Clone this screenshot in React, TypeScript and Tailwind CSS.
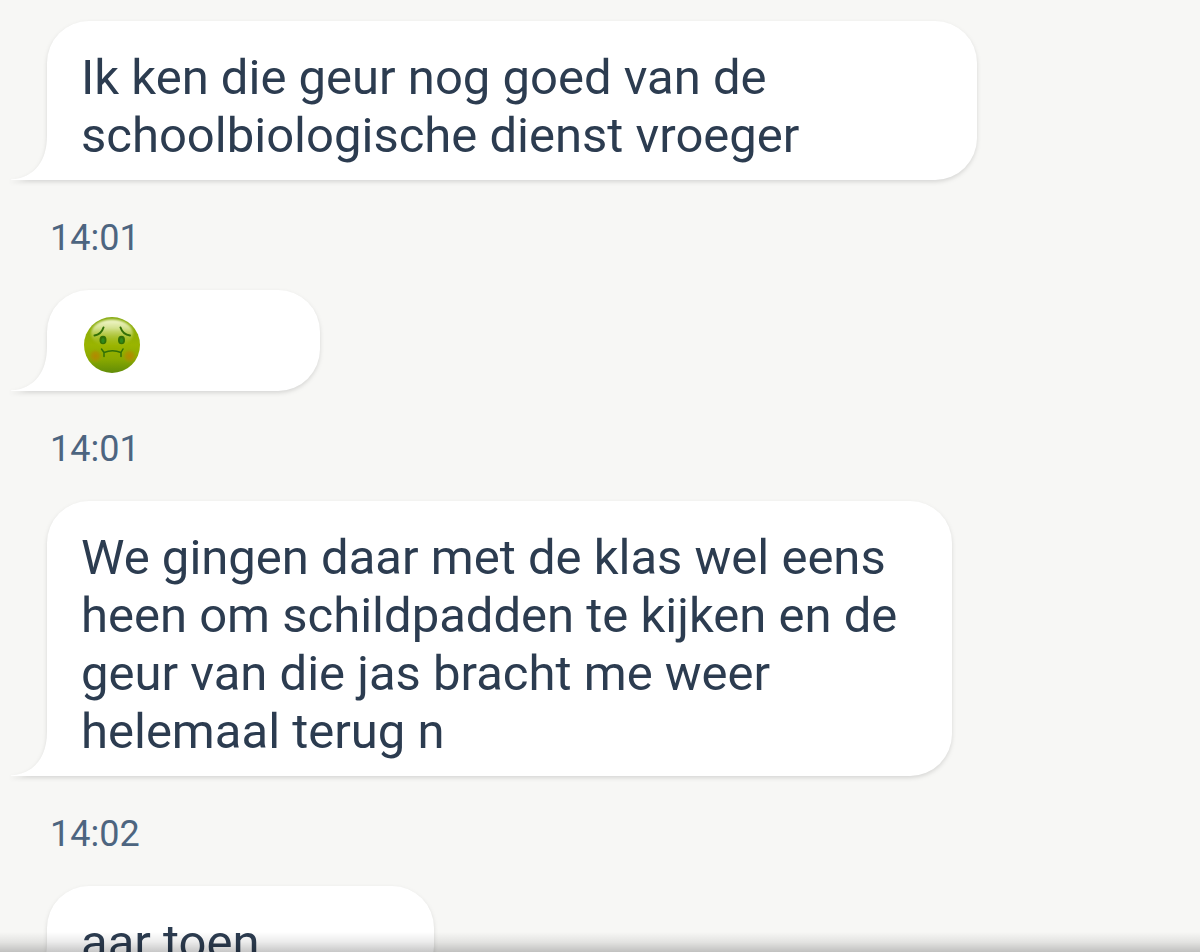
type Message = { text: string; time?: string; box: string; emoji?: boolean };

const messages: Message[] = [
  {
    text: 'Ik ken die geur nog goed van de schoolbiologische dienst vroeger',
    time: '14:01',
    box: 'max-w-[930px] pt-7 pb-[15px]',
  },
  { text: 'Misselijk', time: '14:01', box: 'max-w-[273px] pt-[26px] pb-[17px]', emoji: true },
  {
    text: 'We gingen daar met de klas wel eens heen om schildpadden te kijken en de geur van die jas bracht me weer helemaal terug n',
    time: '14:02',
    box: 'max-w-[905px] pt-7 pb-[15px]',
  },
  { text: 'aar toen', box: 'max-w-[387px] pt-7 pb-[15px]' },
];

function NauseatedFace() {
  return (
    <svg viewBox="0 0 58 58" className="ml-0.5 size-[58px]" role="img" aria-label="Misselijk gezicht">
      <defs>
        <linearGradient id="face" x1="0" y1="0" x2="0" y2="1">
          <stop offset="0" stopColor="#83a80c" />
          <stop offset="0.5" stopColor="#9ab400" />
          <stop offset="0.75" stopColor="#8aa900" />
          <stop offset="1" stopColor="#618c08" />
        </linearGradient>
        <linearGradient id="shine" x1="0" y1="0" x2="0" y2="1">
          <stop offset="0" stopColor="#f4f8cf" />
          <stop offset="0.3" stopColor="#e3edab" stopOpacity="0.85" />
          <stop offset="1" stopColor="#a5bd16" stopOpacity="0" />
        </linearGradient>
        <radialGradient id="cheek">
          <stop offset="0" stopColor="#bd8000" stopOpacity="0.8" />
          <stop offset="0.5" stopColor="#b68700" stopOpacity="0.6" />
          <stop offset="1" stopColor="#a39b00" stopOpacity="0" />
        </radialGradient>
        <filter id="soft" x="-20%" y="-20%" width="140%" height="140%">
          <feGaussianBlur stdDeviation="1.2" />
        </filter>
      </defs>
      <circle cx="29" cy="29" r="28" fill="url(#face)" />
      <ellipse cx="29" cy="17.500" rx="21" ry="14" fill="url(#shine)" filter="url(#soft)" />
      <circle cx="12.500" cy="40" r="7.500" fill="url(#cheek)" />
      <circle cx="46.500" cy="40" r="7.500" fill="url(#cheek)" />
      <g fill="none" stroke="#327006" strokeLinecap="round" strokeLinejoin="round">
        <path d="M11.500 19.500c4-.5 7.500-3.500 9-8" strokeWidth="2" />
        <path d="M37.500 11.500c1.500 4.500 5 7.500 9.500 8" strokeWidth="2" />
        <path d="M21 36.500c5-2.200 12-2.200 17 0M18.500 33l2.500 3.500v4M40 33l-2 3.500v4" strokeWidth="1.500" />
      </g>
      <ellipse cx="20" cy="24" rx="3.500" ry="4.300" fill="#327006" />
      <ellipse cx="38.500" cy="24" rx="3.500" ry="4.300" fill="#327006" />
      <ellipse cx="20" cy="24.500" rx="1.700" ry="2.500" fill="#32891b" />
      <ellipse cx="38.500" cy="24.500" rx="1.700" ry="2.500" fill="#32891b" />
    </svg>
  );
}

function Bubble({ message }: { message: Message }) {
  return (
    <li>
      <div
        className={`relative rounded-[42px] rounded-bl-none bg-white pr-[35px] pl-[34px] drop-shadow-[0_2px_2px_rgba(0,0,0,0.13)] ${message.box}`}
      >
        <svg viewBox="0 0 37 44" className="absolute bottom-0 -left-9 h-11 w-[37px]" aria-hidden="true">
          <path d="M36 0C36 24 24 42 0 43.500V44H37V0Z" fill="#fff" />
        </svg>
        {message.emoji ? <NauseatedFace /> : <p className="text-[49px] leading-[58px] text-[#2c3c50]">{message.text}</p>}
      </div>
      {message.time && (
        <time className="mt-9 mb-[30px] ml-[3px] block text-[36px] leading-[44px] text-[#4d6580]">{message.time}</time>
      )}
    </li>
  );
}

export default function App() {
  return (
    <main className="relative h-screen overflow-hidden bg-[#f7f7f5] font-['Roboto',sans-serif]">
      <ol className="pt-[21px] pr-6 pl-[47px]">
        {messages.map((message) => (
          <Bubble key={message.text} message={message} />
        ))}
      </ol>
      <div className="pointer-events-none absolute inset-x-0 bottom-0 h-5 bg-gradient-to-b from-transparent via-black/8 to-black/22" />
    </main>
  );
}
